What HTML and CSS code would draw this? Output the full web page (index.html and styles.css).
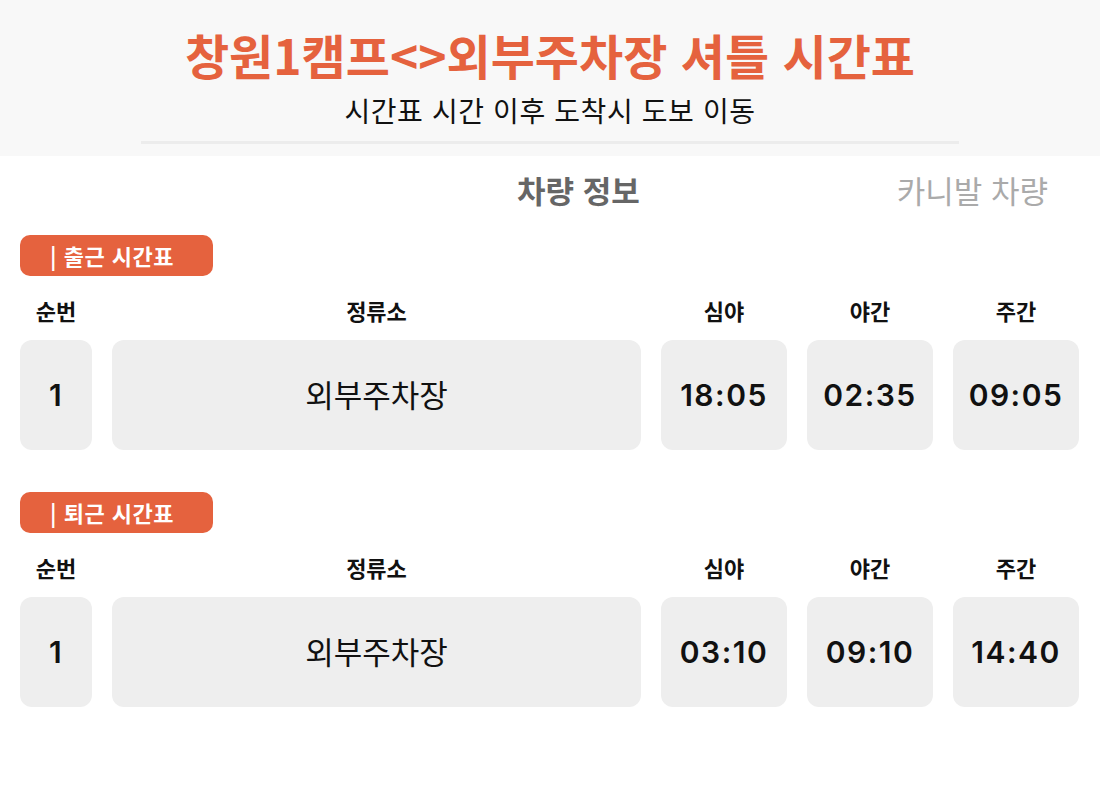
FILE: index.html
```html
<!DOCTYPE html>
<html lang="ko">
  <head>
    <meta charset="UTF-8" />
    <meta name="viewport" content="width=device-width, initial-scale=1.0" />
    <title>창원1캠프 셔틀 시간표</title>
    <link rel="stylesheet" href="styles.css">
  </head>

  <body>
    <header class="top">
      <h1 class="title">창원1캠프&lt;&gt;외부주차장 셔틀 시간표</h1>
      <p class="subtitle">시간표 시간 이후 도착시 도보 이동</p>
      <div class="divider"></div>
    </header>

    <nav class="tabs">
      <span class="tab active">차량 정보</span>
      <span class="tab">카니발 차량</span>
    </nav>

    <main class="content">
      <section class="schedule">
        <div class="badge">| 출근 시간표</div>
        <div class="grid">
          <div class="head">순번</div>
          <div class="head">정류소</div>
          <div class="head">심야</div>
          <div class="head">야간</div>
          <div class="head">주간</div>

          <div class="cell num">1</div>
          <div class="cell stop">외부주차장</div>
          <div class="cell num">18:05</div>
          <div class="cell num">02:35</div>
          <div class="cell num">09:05</div>
        </div>
      </section>

      <section class="schedule">
        <div class="badge">| 퇴근 시간표</div>
        <div class="grid">
          <div class="head">순번</div>
          <div class="head">정류소</div>
          <div class="head">심야</div>
          <div class="head">야간</div>
          <div class="head">주간</div>

          <div class="cell num">1</div>
          <div class="cell stop">외부주차장</div>
          <div class="cell num">03:10</div>
          <div class="cell num">09:10</div>
          <div class="cell num">14:40</div>
        </div>
      </section>
    </main>
  </body>
</html>
```

FILE: styles.css
```css
* {
  box-sizing: border-box;
  margin: 0;
  padding: 0;
}

:root {
  --accent: #e5623e;
  --cell-bg: #eeeeee;
}

body {
  font-family: "Noto Sans CJK KR", "Noto Sans", sans-serif;
  color: #111;
  background: #fff;
}

/* header band */
.top {
  background: #f8f8f8;
  height: 156px;
  display: flex;
  flex-direction: column;
  align-items: center;
  padding-top: 20px;
}

.title {
  color: var(--accent);
  font-size: 48px;
  font-weight: 700;
  line-height: 68px;
}

.subtitle {
  font-size: 28px;
  line-height: 40px;
  letter-spacing: 0.6px;
  margin-top: 2px;
}

.divider {
  width: 818px;
  height: 3px;
  background: #ececec;
  margin-top: 11px;
}

/* tabs */
.tabs {
  display: flex;
  justify-content: flex-end;
  gap: 257px;
  padding-right: 52px;
  height: 66px;
  align-items: center;
}

.tab {
  font-size: 31px;
  color: #aaa;
}

.tab.active {
  color: #666;
  font-weight: 700;
}

/* schedules */
.content {
  padding: 13px 21px 0 20px;
}

.schedule + .schedule {
  margin-top: 42px;
}

.badge {
  width: 193px;
  height: 41px;
  border-radius: 10px;
  background: var(--accent);
  color: #fff;
  font-size: 22px;
  font-weight: 700;
  line-height: 41px;
  letter-spacing: 0.5px;
  padding-left: 30px;
}

.grid {
  display: grid;
  grid-template-columns: 72px 1fr 126px 126px 126px;
  column-gap: 20px;
  margin-top: 19px;
}

.head {
  text-align: center;
  font-size: 22px;
  font-weight: 700;
  line-height: 30px;
  margin-bottom: 15px;
}

.cell {
  background: var(--cell-bg);
  border-radius: 12px;
  height: 110px;
  display: flex;
  align-items: center;
  justify-content: center;
  font-size: 31px;
  padding-bottom: 3px;
}

.cell.num {
  font-family: Inter, "Noto Sans", sans-serif;
  font-weight: 600;
  font-size: 30px;
  letter-spacing: 1.5px;
  padding-bottom: 0;
}
```
